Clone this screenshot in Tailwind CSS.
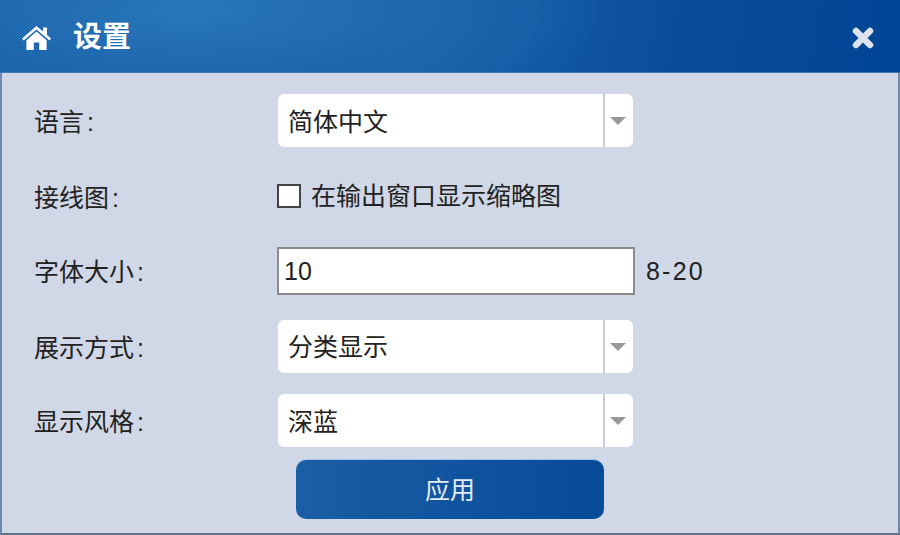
<!DOCTYPE html>
<html lang="zh-CN">
<head>
  <meta charset="UTF-8">
  <title>设置</title>
  <script src="https://cdn.jsdelivr.net/npm/@tailwindcss/browser@4"></script>
</head>
<body class="w-[900px] h-[535px] overflow-hidden bg-[#d0d7e6] font-['Liberation_Sans','Noto_Sans_CJK_SC',sans-serif] text-[25px] text-[#222]">
  <div class="w-[900px] h-[535px] flex flex-col border-l-2 border-r-2 border-b-2 border-l-[#6c8ab0] border-r-[#6c8ab0] border-b-[#5f7288]">
    <!-- title bar -->
    <header class="-mx-[2px] h-[73px] shrink-0 flex items-center pl-[22px] pr-[26px] border-b border-b-[#3f78b4] bg-[radial-gradient(ellipse_420px_120px_at_190px_10px,#2a76ba_0%,#1c66ad_60%,transparent_100%),linear-gradient(100deg,#1660a8_0%,#1a64ab_45%,#0a4c9a_75%,#004495_100%)] text-white">
      <svg class="w-[29px] h-[24px] mr-[22px] mt-[3px]" viewBox="0 0 29 24" fill="#fff">
        <path d="M14.5 0 L21 5.6 V1.5 H25 V9 L29 12.6 L27.4 14.4 L14.5 3.4 L1.6 14.4 L0 12.6 Z"/>
        <path d="M14.5 5.6 L24.6 14.2 V24 H17.2 V16.6 H11.8 V24 H4.4 V14.2 Z"/>
      </svg>
      <span class="text-[29px] font-bold leading-none mt-[3px]">设置</span>
      <svg class="ml-auto w-[22px] h-[22px] mt-[3px]" viewBox="0 0 22 22" fill="none">
        <path d="M4 4 L18 18 M18 4 L4 18" stroke="#dde3ee" stroke-width="6.5" stroke-linecap="round"/>
      </svg>
    </header>

    <main class="flex flex-col pl-[32px] pt-[21px]">
      <div class="flex items-center h-[53px]">
        <label class="w-[244px] pt-[5px]">语言<span class="ml-[3px]">:</span></label>
        <div class="w-[355px] h-[53px] flex bg-white rounded-[6px]">
          <span class="flex-1 flex items-center pl-[10px] pt-[5px]">简体中文</span>
          <span class="w-[30px] pr-[3px] flex items-center justify-center border-l-2 border-l-[#c9ced6]">
            <span class="w-0 h-0 border-x-[8px] border-x-transparent border-t-[8px] border-t-[#999]"></span>
          </span>
        </div>
      </div>

      <div class="flex items-center h-[53px] mt-[23px]">
        <label class="w-[243px] pt-[5px]">接线图<span class="ml-[3px]">:</span></label>
        <span class="w-[24px] h-[24px] bg-white border-2 border-[#444] mr-[10px] -mt-[1px]"></span>
        <span class="pt-[1px]">在输出窗口显示缩略图</span>
      </div>

      <div class="flex items-center h-[47px] mt-[24px] mb-[26px]">
        <label class="w-[243px] pt-[5px]">字体大小<span class="ml-[3px]">:</span></label>
        <div class="w-[358px] h-[48px] flex items-center pl-[5px] pt-[3px] bg-white border-2 border-[#8a8a8a]">10</div>
        <span class="ml-[11px] pt-[3px] tracking-[2.2px]">8-20</span>
      </div>

      <div class="flex items-center h-[53px]">
        <label class="w-[244px] pt-[5px]">展示方式<span class="ml-[3px]">:</span></label>
        <div class="w-[355px] h-[53px] flex bg-white rounded-[6px]">
          <span class="flex-1 flex items-center pl-[10px] pt-[3px]">分类显示</span>
          <span class="w-[30px] pr-[3px] flex items-center justify-center border-l-2 border-l-[#c9ced6]">
            <span class="w-0 h-0 border-x-[8px] border-x-transparent border-t-[8px] border-t-[#999]"></span>
          </span>
        </div>
      </div>

      <div class="flex items-center h-[53px] mt-[21px]">
        <label class="w-[244px] pt-[5px]">显示风格<span class="ml-[3px]">:</span></label>
        <div class="w-[355px] h-[53px] flex bg-white rounded-[6px]">
          <span class="flex-1 flex items-center pl-[10px] pt-[5px]">深蓝</span>
          <span class="w-[30px] pr-[3px] flex items-center justify-center border-l-2 border-l-[#c9ced6]">
            <span class="w-0 h-0 border-x-[8px] border-x-transparent border-t-[8px] border-t-[#999]"></span>
          </span>
        </div>
      </div>

      <button class="ml-[262px] mt-[13px] w-[308px] h-[59px] pt-[3px] rounded-[10px] bg-[linear-gradient(90deg,#1a5ea6,#074a98)] shadow-[0_-1px_0_#a8c6ec] text-[#e4ecf6]">应用</button>
    </main>
  </div>
</body>
</html>
